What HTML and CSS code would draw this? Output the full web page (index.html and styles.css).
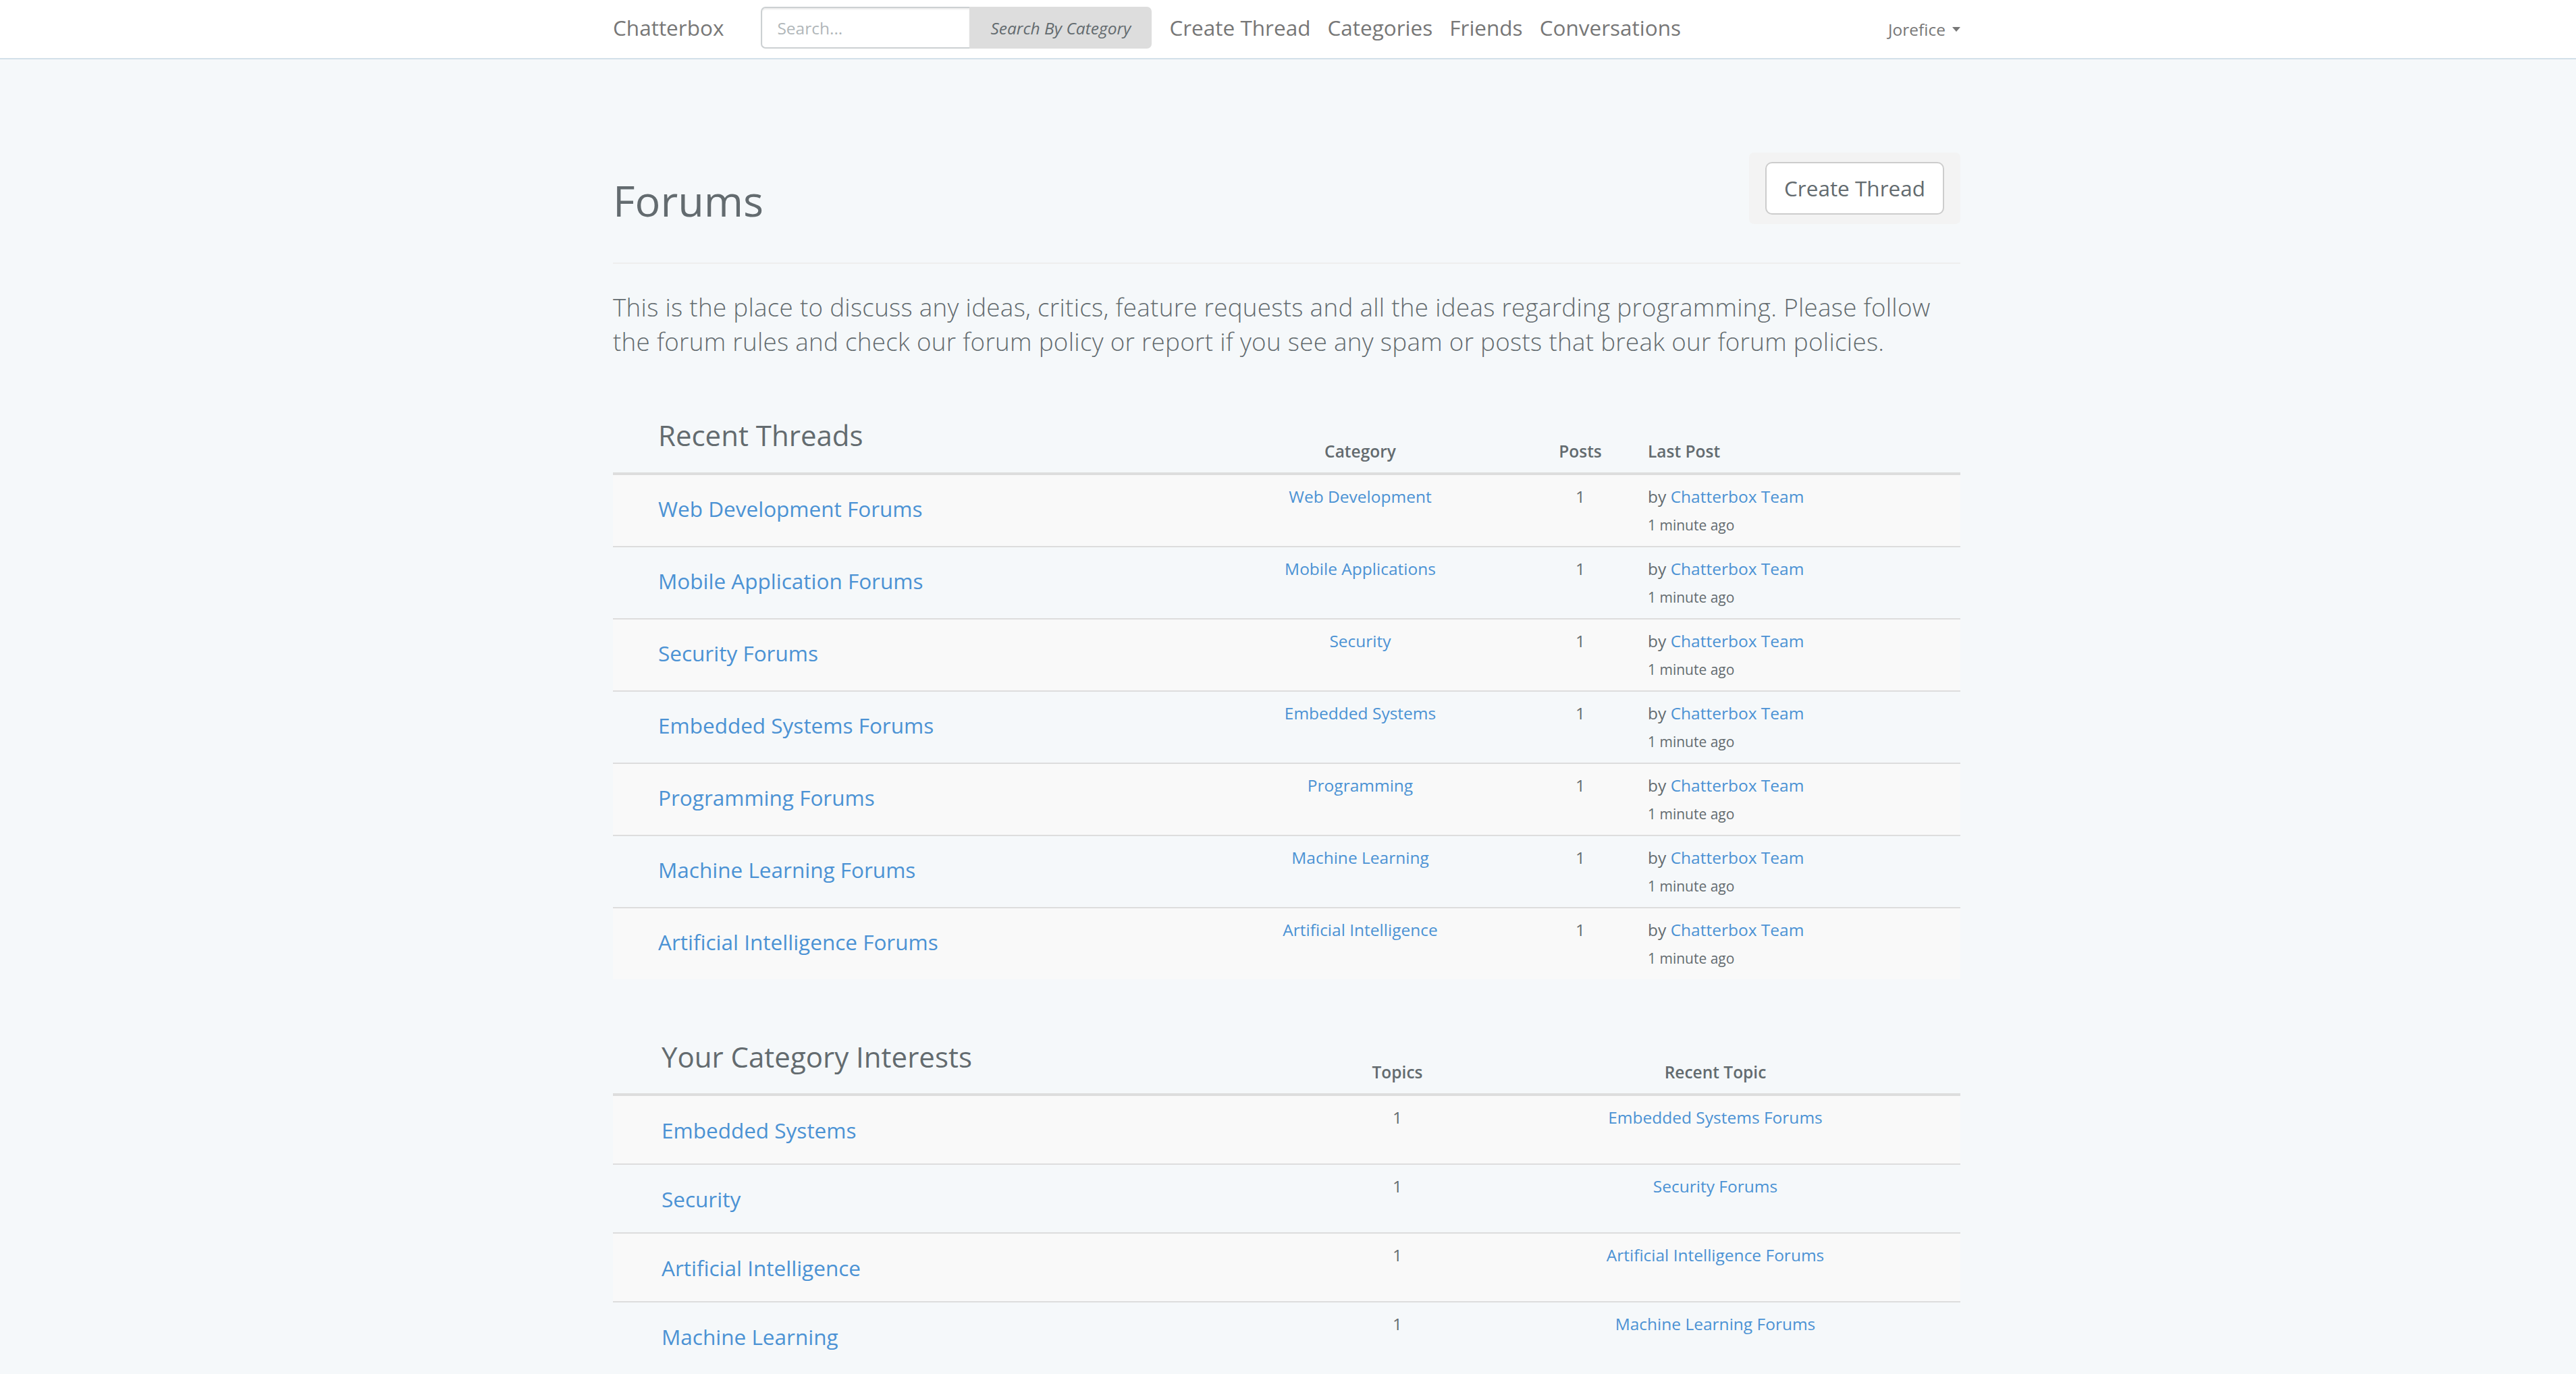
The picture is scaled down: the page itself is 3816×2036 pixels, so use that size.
FILE: index.html
```html
<!DOCTYPE html>
<html lang="en">
<head>
<meta charset="utf-8">
<title>Chatterbox - Forums</title>
<link rel="stylesheet" href="styles.css">
</head>
<body>
<nav class="navbar">
  <div class="container nav-inner">
    <a class="brand" href="#">Chatterbox</a>
    <form class="search">
      <input class="search-input" type="text" placeholder="Search...">
      <button class="search-btn" type="button">Search By Category</button>
    </form>
    <ul class="nav-links">
      <li><a href="#">Create Thread</a></li>
      <li><a href="#">Categories</a></li>
      <li><a href="#">Friends</a></li>
      <li><a href="#">Conversations</a></li>
    </ul>
    <div class="user">Jorefice <span class="caret"></span></div>
  </div>
</nav>

<main class="container">
  <div class="page-header">
    <h1 class="page-title">Forums</h1>
    <div class="action-box"><a class="btn" href="#">Create Thread</a></div>
  </div>

  <p class="lead">This is the place to discuss any ideas, critics, feature requests and all the ideas regarding programming. Please follow the forum rules and check our forum policy or report if you see any spam or posts that break our forum policies.</p>

  <table class="forum-table threads">
    <colgroup>
      <col class="w-blank1"><col class="w-title1"><col class="w-cat"><col class="w-posts"><col class="w-last">
    </colgroup>
    <thead>
      <tr>
        <th></th>
        <th><h3 class="table-title">Recent Threads</h3></th>
        <th class="center">Category</th>
        <th class="center">Posts</th>
        <th>Last Post</th>
      </tr>
    </thead>
    <tbody>
      <tr>
        <td></td>
        <td><h4 class="row-title"><a href="#">Web Development Forums</a></h4></td>
        <td class="center"><a href="#">Web Development</a></td>
        <td class="center">1</td>
        <td>by <a href="#">Chatterbox Team</a><span class="meta-time">1 minute ago</span></td>
      </tr>
      <tr>
        <td></td>
        <td><h4 class="row-title"><a href="#">Mobile Application Forums</a></h4></td>
        <td class="center"><a href="#">Mobile Applications</a></td>
        <td class="center">1</td>
        <td>by <a href="#">Chatterbox Team</a><span class="meta-time">1 minute ago</span></td>
      </tr>
      <tr>
        <td></td>
        <td><h4 class="row-title"><a href="#">Security Forums</a></h4></td>
        <td class="center"><a href="#">Security</a></td>
        <td class="center">1</td>
        <td>by <a href="#">Chatterbox Team</a><span class="meta-time">1 minute ago</span></td>
      </tr>
      <tr>
        <td></td>
        <td><h4 class="row-title"><a href="#">Embedded Systems Forums</a></h4></td>
        <td class="center"><a href="#">Embedded Systems</a></td>
        <td class="center">1</td>
        <td>by <a href="#">Chatterbox Team</a><span class="meta-time">1 minute ago</span></td>
      </tr>
      <tr>
        <td></td>
        <td><h4 class="row-title"><a href="#">Programming Forums</a></h4></td>
        <td class="center"><a href="#">Programming</a></td>
        <td class="center">1</td>
        <td>by <a href="#">Chatterbox Team</a><span class="meta-time">1 minute ago</span></td>
      </tr>
      <tr>
        <td></td>
        <td><h4 class="row-title"><a href="#">Machine Learning Forums</a></h4></td>
        <td class="center"><a href="#">Machine Learning</a></td>
        <td class="center">1</td>
        <td>by <a href="#">Chatterbox Team</a><span class="meta-time">1 minute ago</span></td>
      </tr>
      <tr>
        <td></td>
        <td><h4 class="row-title"><a href="#">Artificial Intelligence Forums</a></h4></td>
        <td class="center"><a href="#">Artificial Intelligence</a></td>
        <td class="center">1</td>
        <td>by <a href="#">Chatterbox Team</a><span class="meta-time">1 minute ago</span></td>
      </tr>
    </tbody>
  </table>

  <table class="forum-table interests">
    <colgroup>
      <col class="w-blank2"><col class="w-title2"><col class="w-topics"><col class="w-recent">
    </colgroup>
    <thead>
      <tr>
        <th></th>
        <th><h3 class="table-title">Your Category Interests</h3></th>
        <th class="center">Topics</th>
        <th class="center">Recent Topic</th>
      </tr>
    </thead>
    <tbody>
      <tr>
        <td></td>
        <td><h4 class="row-title"><a href="#">Embedded Systems</a></h4></td>
        <td class="center">1</td>
        <td class="center"><a href="#">Embedded Systems Forums</a></td>
      </tr>
      <tr>
        <td></td>
        <td><h4 class="row-title"><a href="#">Security</a></h4></td>
        <td class="center">1</td>
        <td class="center"><a href="#">Security Forums</a></td>
      </tr>
      <tr>
        <td></td>
        <td><h4 class="row-title"><a href="#">Artificial Intelligence</a></h4></td>
        <td class="center">1</td>
        <td class="center"><a href="#">Artificial Intelligence Forums</a></td>
      </tr>
      <tr>
        <td></td>
        <td><h4 class="row-title"><a href="#">Machine Learning</a></h4></td>
        <td class="center">1</td>
        <td class="center"><a href="#">Machine Learning Forums</a></td>
      </tr>
    </tbody>
  </table>
</main>
</body>
</html>
```

FILE: styles.css
```css
* { box-sizing: border-box; }
html, body { margin: 0; padding: 0; }
body {
  background: #f5f8fa;
  font-family: "Open Sans", "Liberation Sans", sans-serif;
  font-size: 24.5px;
  line-height: 35px;
  color: #636b6f;
  padding-right: 4px;
}
a { color: #4b92d4; text-decoration: none; }
.container { width: 1996px; margin: 0 auto; }

/* navbar */
.navbar { background: #fff; border-bottom: 2px solid #d3e0e9; margin-right: -4px; padding-right: 4px; }
.nav-inner { display: flex; align-items: center; height: 86px; padding-bottom: 4px; }
.brand { color: #777; font-size: 31.5px; line-height: 40px; margin-right: 55px; }
.search { display: flex; margin: 0; }
.search-input {
  width: 309px; height: 62px; margin: 0;
  border: 2px solid #ccd0d2; border-right: 0; border-radius: 7px 0 0 7px;
  box-shadow: inset 0 2px 2px rgba(0,0,0,0.075);
  padding: 0 22px; background: #fff;
  font-family: inherit; font-size: 24.5px; color: #555;
}
.search-input::placeholder { color: #b1b7ba; }
.search-btn {
  width: 270px; height: 62px; margin: 0; border: 0; padding: 0;
  background: #dddddd; border-radius: 0 7px 7px 0;
  font-family: inherit; font-style: italic; font-size: 24.5px; color: #636b6f;
}
.nav-links { display: flex; gap: 25px; margin: 0 0 0 26px; padding: 0; list-style: none; }
.nav-links a { color: #777; font-size: 31.5px; line-height: 40px; }
.user { margin-left: auto; display: flex; align-items: center; gap: 10px; color: #777; font-size: 24.5px; padding-top: 4px; }
.caret { width: 0; height: 0; border-top: 7px solid #777; border-left: 6px solid transparent; border-right: 6px solid transparent; }

/* page header */
.page-header {
  display: flex; justify-content: space-between; align-items: flex-start;
  margin-top: 138px; padding-bottom: 57px; border-bottom: 2px solid #eee;
}
.page-title { margin: 36px 0 0; font-size: 63px; line-height: 69px; font-weight: 400; color: #636b6f; }
.action-box { display: flex; background: #f3f3f3; padding: 14px 24px; border-radius: 7px; }
.btn {
  display: block; padding: 16px 26px; font-size: 31.5px; line-height: 42px;
  border: 2px solid #ccc; border-radius: 10px; background: #fff; color: #636b6f;
}

.lead { margin: 39px 0 41px; font-size: 36.75px; line-height: 51px; font-weight: 300; letter-spacing: 0.3px; }

/* tables */
.forum-table { width: 100%; border-collapse: collapse; table-layout: fixed; }
.forum-table th, .forum-table td { padding: 14px; }
.forum-table th { vertical-align: bottom; border-bottom: 4px solid #ddd; font-weight: 600; text-align: left; color: #636b6f; }
.forum-table td { vertical-align: top; border-top: 2px solid #ddd; }
.forum-table tbody tr:nth-child(odd) { background: #f9f9f9; }
.forum-table .center { text-align: center; }
.table-title { margin: 35px 0 17.5px; font-size: 42px; line-height: 46px; font-weight: 400; color: #636b6f; }
.row-title { margin: 17.5px 0; font-size: 31.5px; line-height: 37px; font-weight: 400; }
.meta-time { display: block; margin-top: 9px; font-size: 21px; line-height: 33px; }
.threads { margin-bottom: 43px; }

.w-blank1 { width: 53px; }
.w-title1 { width: 814px; }
.w-cat { width: 480px; }
.w-posts { width: 172px; }
.w-last { width: 477px; }
.w-blank2 { width: 58px; }
.w-title2 { width: 996px; }
.w-topics { width: 216px; }
.w-recent { width: 726px; }
```
